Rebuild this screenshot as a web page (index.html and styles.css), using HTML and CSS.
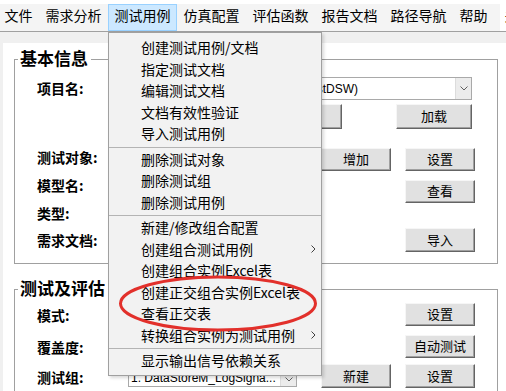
FILE: index.html
```html
<!DOCTYPE html>
<html lang="zh-CN">
<head>
<meta charset="utf-8">
<title>测试用例</title>
<link rel="stylesheet" href="styles.css">
</head>
<body>
<nav class="menubar">
  <span class="mb-item first">文件</span>
  <span class="mb-item">需求分析</span>
  <span class="mb-item active">测试用例</span>
  <span class="mb-item">仿真配置</span>
  <span class="mb-item">评估函数</span>
  <span class="mb-item">报告文档</span>
  <span class="mb-item">路径导航</span>
  <span class="mb-item">帮助</span>
  <span class="mb-item last">关于</span>
</nav>
<div class="rule"></div>
<div class="band"></div>
<div class="workspace">
  <main class="panel">
    <section class="group g1">
      <div class="legend">基本信息</div>
      <div class="row r-proj">
        <div class="lbl">项目名:</div>
        <div class="combo combo-proj">
          <span class="combo-text right">TestModel (TestDSW)</span>
          <span class="combo-btn"><svg width="8" height="5" viewBox="0 0 8 5"><polyline points="0.5,0.5 4,4 7.5,0.5" fill="none" stroke="#606060" stroke-width="1"/></svg></span>
        </div>
      </div>
      <div class="row r-load">
        <div class="lbl"></div>
        <button class="btn btn-wide"></button>
        <button class="btn btn-load">加载</button>
      </div>
      <div class="row r-obj">
        <div class="lbl">测试对象:</div>
        <div class="combo combo-small">
          <span class="combo-text"></span>
          <span class="combo-btn"><svg width="8" height="5" viewBox="0 0 8 5"><polyline points="0.5,0.5 4,4 7.5,0.5" fill="none" stroke="#606060" stroke-width="1"/></svg></span>
        </div>
        <button class="btn btn-c1">增加</button>
        <button class="btn btn-c2">设置</button>
      </div>
      <div class="row r-model">
        <div class="lbl">模型名:</div>
        <button class="btn btn-solo">查看</button>
      </div>
      <div class="row r-type">
        <div class="lbl">类型:</div>
      </div>
      <div class="row r-req">
        <div class="lbl">需求文档:</div>
        <button class="btn btn-solo tall">导入</button>
      </div>
    </section>

    <section class="group g2">
      <div class="legend">测试及评估</div>
      <div class="row r-mode">
        <div class="lbl">模式:</div>
        <button class="btn btn-solo">设置</button>
      </div>
      <div class="row r-cov">
        <div class="lbl">覆盖度:</div>
        <button class="btn btn-solo">自动测试</button>
      </div>
      <div class="row r-grp">
        <div class="lbl">测试组:</div>
        <div class="combo combo-small combo-grp">
          <span class="combo-text">1. DataStoreM_LogSigna...</span>
          <span class="combo-btn"><svg width="8" height="5" viewBox="0 0 8 5"><polyline points="0.5,0.5 4,4 7.5,0.5" fill="none" stroke="#606060" stroke-width="1"/></svg></span>
        </div>
        <button class="btn btn-c1 tall">新建</button>
        <button class="btn btn-c2 tall">设置</button>
      </div>
    </section>
  </main>
</div>

<div class="menu">
  <div class="mi">创建测试用例/文档</div>
  <div class="mi">指定测试文档</div>
  <div class="mi">编辑测试文档</div>
  <div class="mi">文档有效性验证</div>
  <div class="mi">导入测试用例</div>
  <div class="sep"></div>
  <div class="mi">删除测试对象</div>
  <div class="mi">删除测试组</div>
  <div class="mi">删除测试用例</div>
  <div class="sep"></div>
  <div class="mi">新建/修改组合配置</div>
  <div class="mi">创建组合测试用例<svg class="chev" width="5" height="8" viewBox="0 0 5 8"><polyline points="0.5,0.5 4,4 0.5,7.5" fill="none" stroke="#404040" stroke-width="1"/></svg></div>
  <div class="mi">创建组合实例Excel表</div>
  <div class="mi">创建正交组合实例Excel表</div>
  <div class="mi">查看正交表</div>
  <div class="mi">转换组合实例为测试用例<svg class="chev" width="5" height="8" viewBox="0 0 5 8"><polyline points="0.5,0.5 4,4 0.5,7.5" fill="none" stroke="#404040" stroke-width="1"/></svg></div>
  <div class="sep"></div>
  <div class="mi">显示输出信号依赖关系</div>
</div>

<svg class="mark" width="506" height="391" viewBox="0 0 506 391">
  <ellipse cx="218" cy="303.5" rx="97.5" ry="26.5" fill="none" stroke="#e2302b" stroke-width="3"/>
</svg>
</body>
</html>
```
FILE: styles.css
```css
* { box-sizing: border-box; }
html, body { margin: 0; padding: 0; }
body {
  width: 506px;
  height: 391px;
  overflow: hidden;
  position: relative;
  background: #fff;
  color: #000;
  font-family: "Noto Sans CJK SC", "Noto Sans", sans-serif;
}

/* ---------- menu bar ---------- */
.menubar {
  margin-top: 4px;
  width: 500px;
  height: 27px;
  background: #f4f4f4;
  display: flex;
  white-space: nowrap;
}
.mb-item {
  flex: none;
  height: 27px;
  padding: 0 5.5px 5px;
  border: 1px solid transparent;
  font-size: 14px;
  line-height: 20px;
}
.mb-item.first { margin-left: -2px; }
.mb-item.last { margin-left: 4px; }
.mb-item.active { background: #cce8ff; border-color: #99d1ff; }

.rule { height: 1px; background: #a0a0a0; }
.band { height: 11px; background: #f0f0f0; }

.workspace {
  height: 348px;
  background: #f0f0f0;
  padding-left: 3px;
}
.panel {
  height: 100%;
  background: #fff;
  padding: 16px 0 0 11px;
  overflow: hidden;
}

/* ---------- group boxes ---------- */
.group {
  width: 484px;
  border: 1px solid #a0a0a0;
  padding: 0 0 11px 22px;
}
.g2 { margin-top: 25px; height: 200px; border-bottom: none; }
.legend {
  width: fit-content;
  margin: -12px 0 0 -19px;
  padding: 0 3px 0 2px;
  background: #fff;
  font-size: 17px;
  font-weight: 700;
  line-height: 20px;
}

.row { display: flex; align-items: flex-start; }
.lbl {
  flex: none;
  width: 91px;
  font-size: 14px;
  font-weight: 700;
  line-height: 20px;
  white-space: nowrap;
}

.r-proj { margin-top: 9px; height: 23px; }
.r-proj .lbl { line-height: 23px; }
.r-load { margin-top: 4px; height: 25px; }
.r-obj { margin-top: 19px; height: 23px; }
.r-obj .lbl { line-height: 19px; }
.r-model { margin-top: 9px; height: 23px; }
.r-model .lbl { margin-top: -5px; }
.r-type { height: 20px; }
.r-req { margin-top: 5px; height: 24px; }
.r-req .lbl { line-height: 24px; }

.r-mode { margin-top: 5px; height: 23px; }
.r-mode .lbl { margin-top: 1px; line-height: 23px; }
.r-cov { margin-top: 9px; height: 23px; }
.r-cov .lbl { margin-top: 1px; line-height: 23px; }
.r-grp { margin-top: 6px; height: 24px; }
.r-grp .lbl { margin-top: 1px; line-height: 24px; }

/* ---------- combo boxes ---------- */
.combo {
  flex: none;
  display: flex;
  height: 23px;
  border: 1px solid #a9a9a9;
  background: #fff;
  font-family: "Liberation Sans", Arial, sans-serif;
  font-size: 12px;
}
.combo-proj { width: 344px; }
.combo-small { width: 169px; }
.combo-text {
  flex: 1;
  padding: 2px 0 0 2px;
  line-height: 19px;
  white-space: nowrap;
  overflow: hidden;
}
.combo-text.right { text-align: right; padding-right: 97px; }
.combo-grp .combo-text { padding-top: 4px; }
.combo-btn {
  flex: none;
  width: 16px;
  background: #ececec;
  border-left: 1px solid #dcdcdc;
  display: flex;
  align-items: center;
  justify-content: center;
}
.combo-grp .combo-btn { align-items: flex-start; padding-top: 12px; }

/* ---------- buttons ---------- */
.btn {
  flex: none;
  width: 70px;
  height: 23px;
  padding: 0 0 1px;
  background: #e1e1e1;
  border: 1px solid;
  border-color: #f6f6f6 #646464 #646464 #f6f6f6;
  box-shadow: inset -1px -1px 0 #a0a0a0;
  font-family: "Noto Sans CJK SC", sans-serif;
  font-size: 13px;
  line-height: 20px;
  color: #000;
  white-space: nowrap;
}
.btn.tall { height: 24px; }
.btn-wide { width: 214px; height: 25px; }
.btn-load { width: 76px; height: 25px; margin-left: 54px; }
.btn-c1 { margin-left: 24px; }
.btn-c2 { margin-left: 14px; }
.btn-solo { margin-left: 277px; }

/* ---------- drop-down menu ---------- */
.menu {
  position: absolute;
  left: 108px;
  top: 32px;
  width: 214px;
  height: 344px;
  padding-top: 4px;
  background: #f2f2f2;
  border: 1px solid #a0a0a0;
  box-shadow: 2px 2px 3px rgba(0, 0, 0, 0.15);
}
.mi {
  display: flex;
  align-items: center;
  height: 21.5px;
  padding-left: 32px;
  font-size: 14px;
  line-height: 21.5px;
  white-space: nowrap;
}
.chev { margin-left: auto; margin-right: 5px; }
.sep { height: 4px; padding-top: 2px; }
.sep::before {
  content: "";
  display: block;
  height: 1px;
  background: #b4b4b4;
}

.mark {
  position: absolute;
  left: 0;
  top: 0;
  pointer-events: none;
}
```
